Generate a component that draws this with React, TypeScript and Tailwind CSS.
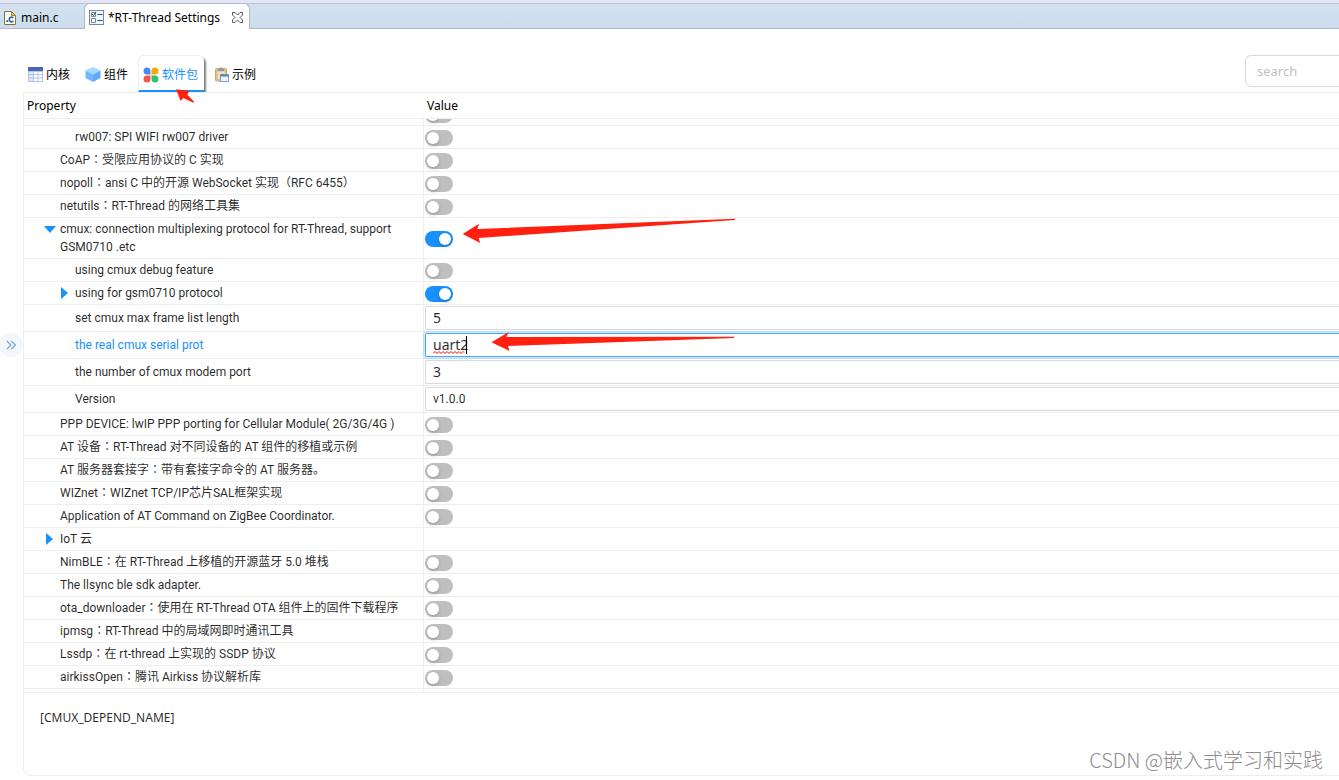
import React from "react";

type Field =
  | { kind: "toggle"; on?: boolean }
  | { kind: "text"; value: string; active?: boolean }
  | { kind: "select"; value: string }
  | { kind: "none" };

interface SettingRow {
  id: string;
  name: string;
  level: 1 | 2;
  expand?: "open" | "closed";
  field: Field;
}

const ROWS: SettingRow[] = [
  { id: "wlan", name: "", level: 2, field: { kind: "toggle" } },
  { id: "rw007", name: "rw007: SPI WIFI rw007 driver", level: 2, field: { kind: "toggle" } },
  { id: "coap", name: "CoAP：受限应用协议的 C 实现", level: 1, field: { kind: "toggle" } },
  { id: "nopoll", name: "nopoll：ansi C 中的开源 WebSocket 实现（RFC 6455）", level: 1, field: { kind: "toggle" } },
  { id: "netutils", name: "netutils：RT-Thread 的网络工具集", level: 1, field: { kind: "toggle" } },
  { id: "cmux", name: "cmux: connection multiplexing protocol for RT-Thread, support GSM0710 .etc", level: 1, expand: "open", field: { kind: "toggle", on: true } },
  { id: "cmux-debug", name: "using cmux debug feature", level: 2, field: { kind: "toggle" } },
  { id: "gsm0710", name: "using for gsm0710 protocol", level: 2, expand: "closed", field: { kind: "toggle", on: true } },
  { id: "frame-len", name: "set cmux max frame list length", level: 2, field: { kind: "text", value: "5" } },
  { id: "serial", name: "the real cmux serial prot", level: 2, field: { kind: "text", value: "uart2", active: true } },
  { id: "modem", name: "the number of cmux modem port", level: 2, field: { kind: "text", value: "3" } },
  { id: "version", name: "Version", level: 2, field: { kind: "select", value: "v1.0.0" } },
  { id: "ppp", name: "PPP DEVICE: lwIP PPP porting for Cellular Module( 2G/3G/4G )", level: 1, field: { kind: "toggle" } },
  { id: "at-device", name: "AT 设备：RT-Thread 对不同设备的 AT 组件的移植或示例", level: 1, field: { kind: "toggle" } },
  { id: "at-server", name: "AT 服务器套接字：带有套接字命令的 AT 服务器。", level: 1, field: { kind: "toggle" } },
  { id: "wiznet", name: "WIZnet：WIZnet TCP/IP芯片SAL框架实现", level: 1, field: { kind: "toggle" } },
  { id: "zigbee", name: "Application of AT Command on ZigBee Coordinator.", level: 1, field: { kind: "toggle" } },
  { id: "iot", name: "IoT 云", level: 1, expand: "closed", field: { kind: "none" } },
  { id: "nimble", name: "NimBLE：在 RT-Thread 上移植的开源蓝牙 5.0 堆栈", level: 1, field: { kind: "toggle" } },
  { id: "llsync", name: "The llsync ble sdk adapter.", level: 1, field: { kind: "toggle" } },
  { id: "ota", name: "ota_downloader：使用在 RT-Thread OTA 组件上的固件下载程序", level: 1, field: { kind: "toggle" } },
  { id: "ipmsg", name: "ipmsg：RT-Thread 中的局域网即时通讯工具", level: 1, field: { kind: "toggle" } },
  { id: "lssdp", name: "Lssdp：在 rt-thread 上实现的 SSDP 协议", level: 1, field: { kind: "toggle" } },
  { id: "airkiss", name: "airkissOpen：腾讯 Airkiss 协议解析库", level: 1, field: { kind: "toggle" } },
  { id: "next", name: "", level: 1, field: { kind: "none" } },
];

const CFileIcon = () => (
  <svg width="12" height="14" viewBox="0 0 12 14" fill="none">
    <path d="M.5 .5h7l4 4v9H.5z" fill="#f7fafc" stroke="#8a7433" />
    <path d="M7.500 .5v4h4z" fill="#e6bf5a" stroke="#a5842e" />
    <path d="M9.300 6.700C7 5.400 5.300 6.600 5.300 8.500s1.700 3.100 4 1.800" stroke="#2b6489" strokeWidth="1.600" />
    <rect x="2.300" y="9.200" width="1.800" height="1.800" fill="#2b6489" />
  </svg>
);

const SettingsFileIcon = () => (
  <svg width="15" height="15" viewBox="0 0 15 15" fill="none">
    <rect x=".5" y=".5" width="14" height="14" fill="#eef6fc" stroke="#6d8aa8" />
    <path d="M2.500 2.500h4v4h-4zM2.500 8.500h4v4h-4z" fill="#fff" stroke="#7a8896" />
    <path d="M3 4l1.500 1.500L7 2" stroke="#2b3f57" />
    <path d="M8.500 4.500h5M8.500 10.500h5" stroke="#2f4f72" />
  </svg>
);

const CloseIcon = () => (
  <svg width="11" height="11" viewBox="0 0 11 11" fill="#fff" stroke="#5a5a5a">
    <path d="M.5.500H3L5.500 3 8 .5h2.500V3L8 5.500 10.500 8v2.500H8L5.500 8 3 10.500H.5V8L3 5.500.5 3z" />
  </svg>
);

const KernelIcon = () => (
  <svg width="15" height="15" viewBox="0 0 15 15">
    <rect width="15" height="15" fill="#b3c6ea" />
    <rect width="15" height="4" fill="#4767b0" />
    <path d="M1 5h4v2H1zM1 8h4v2.500H1zM1 11.500h4V14H1z" fill="#dfe8f8" />
    <path d="M6 5h3.500v2H6zM10.500 5H14v2h-3.500zM6 8h3.500v2.500H6zM10.500 8H14v2.500h-3.500zM6 11.500h3.500V14H6zM10.500 11.500H14V14h-3.500z" fill="#fff" />
  </svg>
);

const ComponentIcon = () => (
  <svg width="16" height="15" viewBox="0 0 16 15">
    <path d="M8 0l7.500 3.500L8 7.500.5 3.500z" fill="#a5d8ff" />
    <path d="M.5 3.500L8 7.500V15L.5 11z" fill="#70b8ff" />
    <path d="M15.500 3.500L8 7.500V15l7.500-4z" fill="#5fa9fb" />
  </svg>
);

const PackageIcon = () => (
  <svg width="16" height="16" viewBox="0 0 16 16">
    <path d="M4 .5a3.500 3.500 0 0 1 3.500 3.500v3.500H4A3.500 3.500 0 0 1 4 .5z" fill="#4a86f7" />
    <path d="M12 .5a3.500 3.500 0 0 1 0 7H8.500V4A3.500 3.500 0 0 1 12 .5z" fill="#f7a70a" />
    <path d="M4 8.500h3.500V12A3.500 3.500 0 1 1 4 8.500z" fill="#f5544d" />
    <path d="M8.500 8.500H12A3.500 3.500 0 1 1 8.500 12z" fill="#2fc36c" />
  </svg>
);

const ExampleIcon = () => (
  <svg width="14" height="15" viewBox="0 0 14 15">
    <rect x=".5" y="1.500" width="11" height="12.500" rx="1" fill="#e0bc8c" stroke="#d0a974" />
    <path d="M2.500 4.500h7.500V12H2.500z" fill="#f1dfc6" />
    <path d="M3 4V2h1.500L5 .5h2L7.500 2H9v2z" fill="#8f99a8" />
    <rect x="5.500" y="7.500" width="8" height="7" fill="#eaf3fc" stroke="#7fa0c2" />
    <path d="M5.500 7.500h8v2h-8z" fill="#5b84ad" />
  </svg>
);

const CONFIG_TABS = [
  { label: "内核", icon: <KernelIcon />, active: false },
  { label: "组件", icon: <ComponentIcon />, active: false },
  { label: "软件包", icon: <PackageIcon />, active: true },
  { label: "示例", icon: <ExampleIcon />, active: false },
];

// The full-width colon sits in the middle of its cell only in the TC cut
const RowName = ({ text }: { text: string }) => (
  <>
    {text.split(/(：)/).map((part, i) =>
      part === "：" ? <span key={i} className="font-['Noto_Sans_CJK_TC',sans-serif] leading-none" lang="zh-TW">{part}</span> : part
    )}
  </>
);

const Expander = ({ state, name }: { state: "open" | "closed"; name: string }) => (
  <button type="button" aria-label={name} aria-expanded={state === "open"} className="flex h-[18px] items-center">
    {state === "open" ? (
      <svg width="12" height="7" viewBox="0 0 12 7" fill="#1890ff"><path d="M0 0h12L6 7z" /></svg>
    ) : (
      <svg width="12" height="12" viewBox="0 0 12 12" fill="#1890ff"><path d="M2 0l7 6-7 6z" /></svg>
    )}
  </button>
);

const FieldCell = ({ row }: { row: SettingRow }) => {
  const { field } = row;

  if (field.kind === "none") return null;

  if (field.kind === "toggle") {
    return (
      <input
        id={row.id}
        type="checkbox"
        role="switch"
        aria-label={row.name || row.id}
        defaultChecked={field.on}
        className="block h-4 w-7 appearance-none rounded-full bg-[#bfbfbf] p-0.5 before:block before:size-3 before:rounded-full before:bg-white before:shadow-[0_2px_4px_rgba(0,35,11,0.2)] checked:bg-[#1890ff] checked:before:ml-3"
      />
    );
  }

  if (field.kind === "select") {
    return (
      <select id={row.id} defaultValue={field.value} className="block h-6 w-full appearance-none rounded-xs border border-[#d9d9d9] bg-white px-[7px] font-['Roboto',sans-serif] text-xs text-black/85">
        <option>{field.value}</option>
      </select>
    );
  }

  return (
    <div className="relative">
      <input
        id={row.id}
        type="text"
        defaultValue={field.value}
        className={`block h-6 w-full rounded-xs border bg-white px-[7px] pb-0.5 text-sm text-black/85 outline-none ${
          field.active ? "border-[#40a9ff] shadow-[0_0_0_2px_rgba(24,144,255,0.2)]" : "border-[#d9d9d9]"
        }`}
      />
      {field.active && (
        <span className="pointer-events-none absolute top-[3px] left-2 flex h-[18px] w-[34px] items-end border-r border-black">
          <svg width="33" height="3" viewBox="0 0 33 3" fill="none" stroke="#f00">
            <path d="M0 2.500l2-2 2 2 2-2 2 2 2-2 2 2 2-2 2 2 2-2 2 2 2-2 2 2 2-2 2 2 2-2 1 1" />
          </svg>
        </span>
      )}
    </div>
  );
};

export default function App() {
  return (
    <div className="relative flex h-screen flex-col overflow-hidden bg-white font-['Noto_Sans','Noto_Sans_CJK_SC',sans-serif] text-xs text-black/85">
      {/* Editor tabs */}
      <div className="flex h-[29px] shrink-0 border-b border-[#b4b8cf] bg-[#e4e6f6] pt-[3px]">
        <div className="flex flex-1 border-t border-[#bfc4d4] bg-linear-to-b from-[#d3e1ef] to-[#cddded] text-black">
          <button type="button" className="flex w-[84px] items-center gap-[5px] pt-1 pl-1">
            <CFileIcon />
            main.c
          </button>
          <div className="-mt-px -mb-px flex h-[26px] w-[166px] items-center gap-1 rounded-t-md border border-b-0 border-[#b4b8cf] bg-white px-1 pt-0.5">
            <SettingsFileIcon />
            <button type="button">*RT-Thread Settings</button>
            <button type="button" aria-label="Close" className="ml-auto px-0.5"><CloseIcon /></button>
          </div>
        </div>
      </div>

      <main className="-mr-24 flex min-h-0 flex-1 flex-col pt-[26px] pb-1 pl-[23px]">
        {/* Config tabs and search */}
        <div className="flex shrink-0 items-start justify-between">
          <nav className="flex h-[37px]">
            {CONFIG_TABS.map((tab) => (
              <button
                key={tab.label}
                type="button"
                className={`flex items-center gap-[3px] ${
                  tab.active
                    ? "mr-1.5 rounded-t-md border-t border-b-2 border-l border-t-[#eee] border-b-[#1890ff] border-l-[#eee] pt-1 pr-1.5 pl-1 text-[#1890ff] shadow-[2px_2px_2px_rgba(0,0,0,0.5)]"
                    : "pt-0.5 pr-2.5 pl-[5px] text-black"
                }`}
              >
                {tab.icon}
                {tab.label}
              </button>
            ))}
          </nav>
          <input
            type="search"
            aria-label="search"
            placeholder="search"
            className="h-8 w-[190px] rounded-md border border-[#d9d9d9] px-[11px] text-[13px] outline-none placeholder:text-[#bfbfbf]"
          />
        </div>

        <section className="relative flex min-h-0 flex-1 flex-col rounded-bl-lg border border-[#eee] bg-white">
          <table className="w-full shrink-0 table-fixed border-separate border-spacing-0 text-left">
            <thead>
              <tr>
                <th className="h-[26px] w-[400px] border-b border-[#eee] pl-[3px] font-normal text-black">Property</th>
                <th className="border-b border-[#eee] pl-[3px] font-normal text-black">Value</th>
              </tr>
            </thead>
          </table>

          <div className="min-h-0 flex-1 overflow-hidden">
            <table className="-mt-4 w-full table-fixed border-separate border-spacing-0">
              <tbody>
                {ROWS.map((row) => (
                  <tr key={row.id}>
                    <td className={`h-[23px] w-[400px] border-r border-b border-[#eee] py-0.5 pr-5 ${row.level === 1 ? "pl-5" : "pl-[35px]"}`}>
                      <div className="grid grid-cols-[16px_1fr] font-['Roboto','Noto_Sans_CJK_SC',sans-serif] leading-[18px]">
                        {row.expand ? <Expander state={row.expand} name={row.name} /> : <span />}
                        <label htmlFor={row.id} className={row.id === "serial" ? "text-[#1890ff]" : ""}>
                          <RowName text={row.name} />
                        </label>
                      </div>
                    </td>
                    <td className={`border-b border-[#eee] pl-px ${row.field.kind === "toggle" ? "pt-1 pb-0.5" : "py-px"}`}>
                      <FieldCell row={row} />
                    </td>
                  </tr>
                ))}
              </tbody>
            </table>
          </div>

          {/* Description of the selected setting */}
          <div className="h-[83px] shrink-0 border-t border-[#eee] px-4 py-4">
            <p className="leading-[18px]">[CMUX_DEPEND_NAME]</p>
          </div>
        </section>
      </main>

      <button type="button" aria-label="Expand panel" className="absolute top-[333px] -left-px flex size-6 items-center justify-center rounded-full bg-[#f3f6fa]">
        <svg width="10" height="10" viewBox="0 0 10 10" fill="none" stroke="#7ba3cf" strokeWidth="1.200">
          <path d="M.8.800L4.800 5l-4 4.200M5.300.800l4 4.200-4 4.200" />
        </svg>
      </button>

      {/* Hand-drawn arrows */}
      <svg className="pointer-events-none absolute top-[88px] left-[174px]" width="22" height="16" viewBox="174 88 22 16" fill="#ff2010">
        <path d="M176 89.300L189.300 91l-2 3.700 6.900 7-.9 1-10-4.700-2.600 3z" />
      </svg>
      <svg className="pointer-events-none absolute top-[217px] left-[462px]" width="274" height="136" viewBox="462 217 274 136" fill="#ff2010">
        <path d="M462.700 234L479 223.700l-1.700 5.300L735 218.700V220L478.700 238l1.500 5z" />
        <path d="M491.500 342.300L508.700 332l-2.400 5L734 336.800v1.200L508 346l1.500 5z" />
      </svg>

      <div className="pointer-events-none absolute right-4 bottom-1.5 font-['Noto_Sans_CJK_SC',sans-serif] text-xl leading-7 font-light text-[#8c8c8c]">
        CSDN @嵌入式学习和实践
      </div>
    </div>
  );
}
